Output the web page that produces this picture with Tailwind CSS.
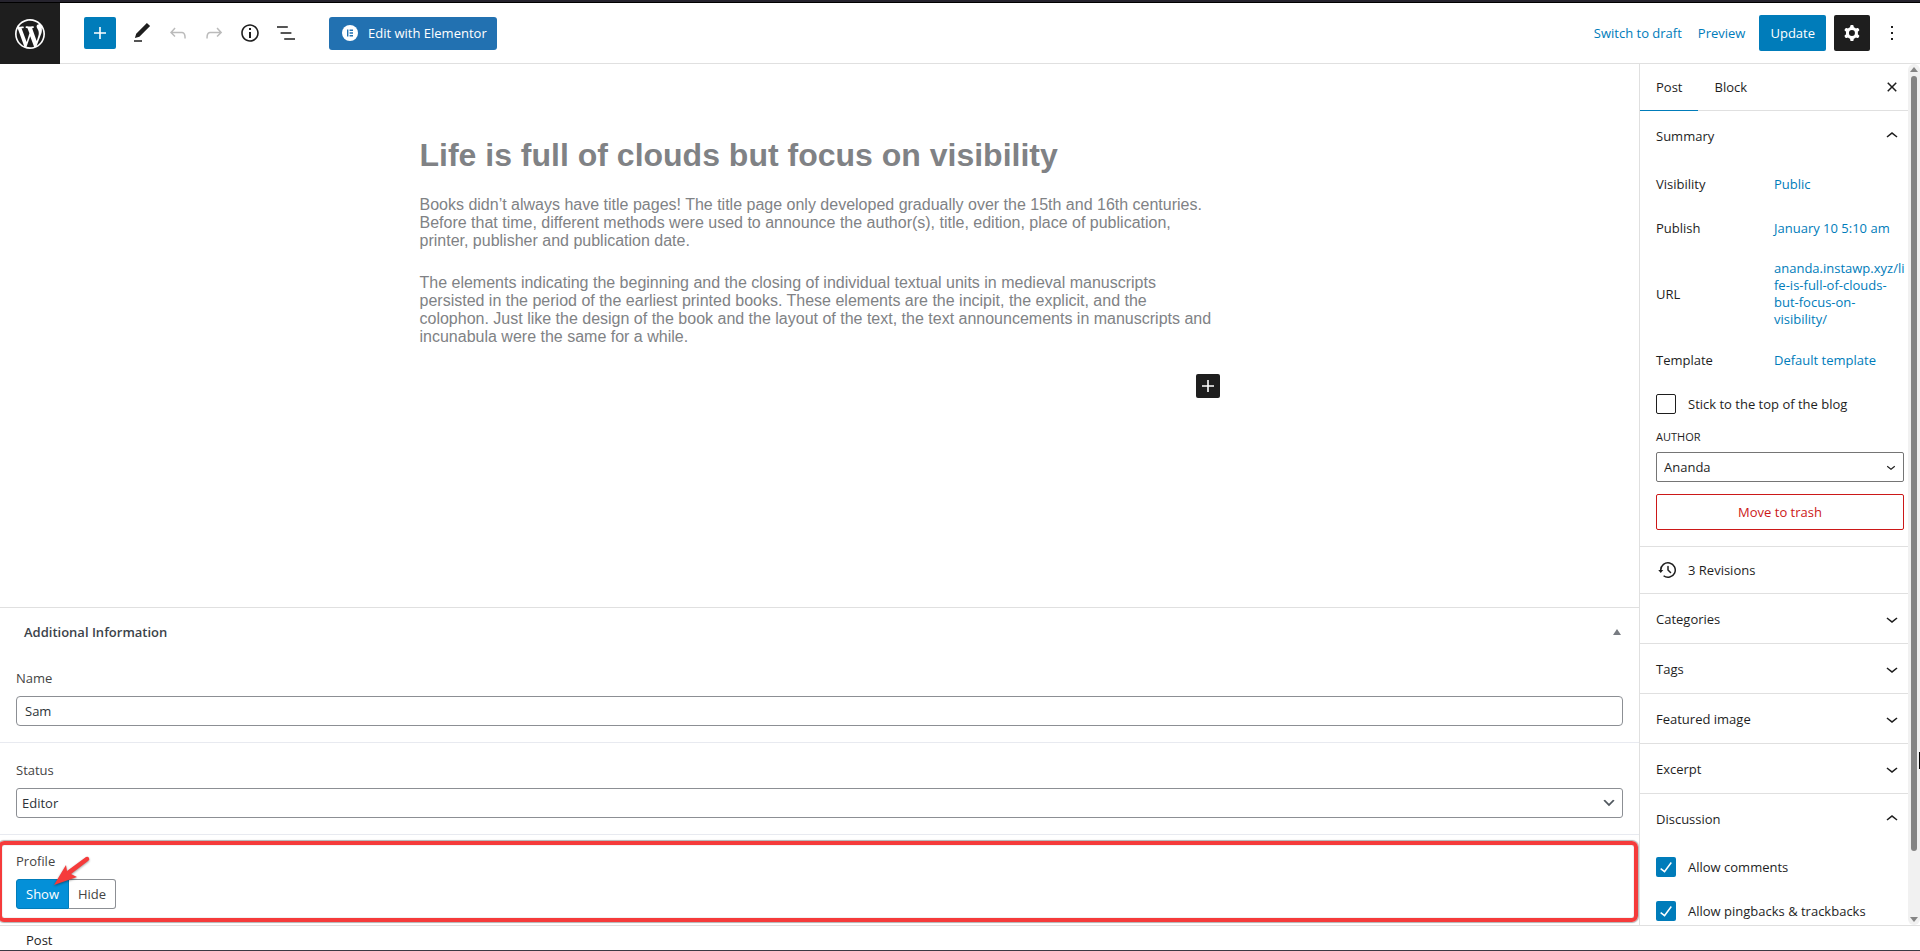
<!DOCTYPE html>
<html lang="en">
<head>
  <meta charset="UTF-8">
  <meta name="viewport" content="width=device-width, initial-scale=1.0">
  <title>Edit Post - WordPress</title>
  <script src="https://cdn.jsdelivr.net/npm/@tailwindcss/browser@4"></script>
</head>
<body class="h-screen flex flex-col overflow-hidden bg-white font-['Open_Sans',sans-serif] text-[13px] leading-5 text-[#1e1e1e]">

  <!-- Browser edge -->
  <div class="h-[3px] shrink-0 bg-[#25232d] border-b border-black"></div>

  <!-- Header -->
  <header class="h-[61px] shrink-0 flex items-stretch">
    <a href="#" aria-label="View posts" class="w-15 bg-[#1e1e1e] text-white flex items-center justify-center">
      <svg class="size-9" viewBox="-2 -2 24 24" fill="currentColor"><path d="M20 10c0-5.51-4.49-10-10-10C4.48 0 0 4.49 0 10c0 5.52 4.48 10 10 10 5.51 0 10-4.48 10-10zM7.78 15.37L4.37 6.22c.55-.02 1.17-.08 1.17-.08.5-.06.44-1.13-.06-1.11 0 0-1.45.11-2.37.11-.18 0-.37 0-.58-.01C4.12 2.69 6.87 1.11 10 1.11c2.33 0 4.45.87 6.05 2.34-.68-.11-1.65.39-1.65 1.58 0 .74.45 1.36.9 2.1.35.61.55 1.36.55 2.46 0 1.49-1.4 5-1.4 5l-3.03-8.37c.54-.02.82-.17.82-.17.5-.05.44-1.25-.06-1.22 0 0-1.44.12-2.38.12-.87 0-2.33-.12-2.33-.12-.5-.03-.56 1.2-.06 1.22l.92.08 1.26 3.41zM17.41 10c.24-.64.74-1.87.43-4.25.7 1.29 1.05 2.71 1.05 4.25 0 3.29-1.73 6.24-4.4 7.78.97-2.59 1.94-5.2 2.92-7.78zM6.1 18.09C3.12 16.65 1.11 13.53 1.11 10c0-1.3.23-2.48.72-3.59C3.25 10.3 4.67 14.2 6.1 18.09zm4.03-6.63l2.58 6.98c-.86.29-1.76.45-2.71.45-.79 0-1.57-.11-2.29-.33.81-2.38 1.62-4.74 2.42-7.1z"/></svg>
    </a>
    <div class="flex-1 flex items-center justify-between pl-6 pr-2.5 border-b border-[#e0e0e0]">
      <div class="flex items-center">
        <button aria-label="Toggle block inserter" class="size-8 mr-2 rounded-xs bg-[#007cba] text-white flex items-center justify-center">
          <svg class="size-6" viewBox="0 0 24 24" fill="currentColor"><path d="M18 11.2h-5.2V6h-1.6v5.2H6v1.6h5.2V18h1.6v-5.2H18z"/></svg>
        </button>
        <button aria-label="Tools" class="size-9 flex items-center justify-center">
          <svg class="size-6" viewBox="0 0 24 24" fill="currentColor"><path d="M20.1 5.1L16.9 2 6.2 12.7l-1.3 4.4 4.5-1.3L20.1 5.1zM4 20.8h8v-1.5H4v1.5z"/></svg>
        </button>
        <button aria-label="Undo" class="size-9 flex items-center justify-center text-[#bbb]">
          <svg class="size-6" viewBox="0 0 24 24" fill="currentColor"><path d="M18.3 11.7c-.6-.6-1.4-.9-2.3-.9H6.7l2.9-3.3-1.1-1-4.5 5L8.5 16l1-1-2.7-2.7H16c.5 0 .9.2 1.3.5 1 1 1 3.4 1 4.5v.3h1.5v-.2c0-1.5 0-4.3-1.5-5.7z"/></svg>
        </button>
        <button aria-label="Redo" class="size-9 flex items-center justify-center text-[#bbb]">
          <svg class="size-6" viewBox="0 0 24 24" fill="currentColor"><path d="M15.6 6.5l-1.1 1 2.9 3.3H8c-.9 0-1.7.3-2.3.9-1.4 1.5-1.4 4.2-1.4 5.6v.2h1.5v-.3c0-1.1 0-3.5 1-4.5.3-.3.7-.5 1.3-.5h9.2L14.5 15l1.1 1.1 4.6-4.6-4.6-5z"/></svg>
        </button>
        <button aria-label="Details" class="size-9 flex items-center justify-center">
          <svg class="size-6" viewBox="0 0 24 24" fill="currentColor"><path d="M12 3.2c-4.8 0-8.8 3.9-8.8 8.8 0 4.8 3.9 8.8 8.8 8.8 4.8 0 8.8-3.9 8.8-8.8 0-4.8-4-8.8-8.8-8.8zm0 16c-4 0-7.2-3.3-7.2-7.2C4.8 8 8 4.8 12 4.8s7.2 3.3 7.2 7.2c0 4-3.2 7.2-7.2 7.2zM11 17h2v-6h-2v6zm0-8h2V7h-2v2z"/></svg>
        </button>
        <button aria-label="List View" class="size-9 mr-[25px] flex items-center justify-center">
          <svg class="size-6" viewBox="0 0 24 24" fill="currentColor"><path d="M13.8 5.2H3v1.5h10.8V5.2zm-3.6 12v1.5H21v-1.5H10.2zm7.2-6H6.6v1.5h10.8v-1.5z"/></svg>
        </button>
        <button class="h-[33px] pl-[13px] pr-2.5 rounded-[3px] bg-[#2271b1] text-white flex items-center gap-2.5">
          <svg class="size-4" viewBox="0 0 16 16"><circle cx="8" cy="8" r="8" fill="#fff"/><path d="M5 4.6h1.4v6.8H5zM7.6 4.6H11v1.3H7.6zM7.6 7.35H11v1.3H7.6zM7.6 10.1H11v1.3H7.6z" fill="#2271b1"/></svg>
          Edit with Elementor
        </button>
      </div>
      <div class="flex items-center">
        <button class="mr-4 text-[#007cba]">Switch to draft</button>
        <a href="#" class="mr-3.5 text-[#007cba]">Preview</a>
        <button class="h-9 px-[11px] mr-2 rounded-xs bg-[#007cba] text-white">Update</button>
        <button aria-label="Settings" class="size-9 mr-1 rounded-xs bg-[#1e1e1e] text-white flex items-center justify-center">
          <svg class="size-6" viewBox="0 0 24 24" fill="currentColor" fill-rule="evenodd"><path d="M10.289 4.836A1 1 0 0111.275 4h1.306a1 1 0 01.987.836l.244 1.466c.787.26 1.503.679 2.108 1.218l1.393-.522a1 1 0 011.216.437l.653 1.13a1 1 0 01-.23 1.273l-1.148.944a6.025 6.025 0 010 2.435l1.149.946a1 1 0 01.23 1.272l-.653 1.13a1 1 0 01-1.216.437l-1.394-.522c-.605.54-1.32.958-2.108 1.218l-.244 1.466a1 1 0 01-.987.836h-1.306a1 1 0 01-.986-.836l-.244-1.466a5.995 5.995 0 01-2.108-1.218l-1.394.522a1 1 0 01-1.217-.436l-.653-1.131a1 1 0 01.23-1.272l1.149-.946a6.026 6.026 0 010-2.435l-1.148-.944a1 1 0 01-.23-1.272l.653-1.131a1 1 0 011.217-.437l1.393.522a5.994 5.994 0 012.108-1.218l.244-1.466zM14.929 12a3 3 0 11-6 0 3 3 0 016 0z"/></svg>
        </button>
        <button aria-label="Options" class="size-9 flex items-center justify-center">
          <svg class="size-6" viewBox="0 0 24 24" fill="currentColor"><path d="M13 19h-2v-2h2v2zm0-6h-2v-2h2v2zm0-6h-2V5h2v2z"/></svg>
        </button>
      </div>
    </div>
  </header>

  <div class="flex-1 min-h-0 flex">
    <!-- Editor -->
    <main class="flex-1 min-w-0 flex flex-col">
      <article class="flex-1 min-h-0 w-full max-w-[800px] mx-auto pt-[73px] font-['Liberation_Sans',sans-serif] text-base leading-[18px] text-[#808285]">
        <h1 class="text-[32px] leading-9 font-bold">Life is full of clouds but focus on visibility</h1>
        <p class="mt-[23px]">Books didn’t always have title pages! The title page only developed gradually over the 15th and 16th centuries. Before that time, different methods were used to announce the author(s), title, edition, place of publication, printer, publisher and publication date.</p>
        <p class="mt-6">The elements indicating the beginning and the closing of individual textual units in medieval manuscripts persisted in the period of the earliest printed books. These elements are the incipit, the explicit, and the colophon. Just like the design of the book and the layout of the text, the text announcements in manuscripts and incunabula were the same for a while.</p>
        <div class="mt-7 flex justify-end">
          <button aria-label="Add block" class="size-6 rounded-xs bg-[#1e1e1e] text-white">
            <svg class="size-6" viewBox="0 0 24 24" fill="currentColor"><path d="M18 11.2h-5.2V6h-1.6v5.2H6v1.6h5.2V18h1.6v-5.2H18z"/></svg>
          </button>
        </div>
      </article>

      <!-- Meta box -->
      <section class="border-t border-[#e0e0e0] text-[#444]">
        <div class="h-12 pl-6 pr-3 flex items-center justify-between">
          <h2 class="font-semibold text-[#3c434a]">Additional Information</h2>
          <button aria-label="Toggle panel" class="p-1.5">
            <svg class="w-2 h-1.5" viewBox="0 0 8 6" fill="#787c82"><path d="M4 0l4 6H0z"/></svg>
          </button>
        </div>
        <div class="px-4 pt-3 pb-4 border-b border-[#e8eaf0]">
          <label for="name" class="block mb-2">Name</label>
          <input id="name" type="text" value="Sam" class="block w-full h-[30px] px-2 border border-[#8c8f94] rounded-sm bg-white text-[#2c3338]">
        </div>
        <div class="px-4 pt-[17px] pb-4 border-b border-[#e8eaf0]">
          <label for="status" class="block mb-2">Status</label>
          <div class="relative">
            <select id="status" class="appearance-none block w-full h-[30px] px-[5px] border border-[#8c8f94] rounded-[3px] bg-white text-[#2c3338]">
              <option>Editor</option>
            </select>
            <svg class="absolute right-1.5 top-[7px] size-4 pointer-events-none" viewBox="0 0 20 20" fill="#50575e"><path d="M5 6l5 5 5-5 2 1-7 7-7-7 2-1z"/></svg>
          </div>
        </div>
        <div class="relative px-4 pt-4 pb-4">
          <div id="profile-label" class="mb-2">Profile</div>
          <div role="group" aria-labelledby="profile-label" class="flex">
            <button class="h-[30px] px-[9px] rounded-l-[3px] border border-[#007cba] bg-[#0490d8] text-white">Show</button>
            <button class="h-[30px] px-[9px] rounded-r-[3px] border border-l-0 border-[#8c8f94]">Hide</button>
          </div>
          <!-- Highlight and arrow -->
          <div class="absolute -left-0.5 right-px top-1.5 bottom-[3px] border-4 border-[#f53b3b] rounded-md shadow-[0_0_1px_1px_#0000004d,inset_0_0_1px_#00000080] pointer-events-none"></div>
          <svg class="absolute left-13 top-5 w-10 h-8 pointer-events-none drop-shadow-[0_1px_1px_#00000066]" viewBox="0 0 40 32" fill="#f53b3b"><path d="M2 30L14 10l1 6L34 2q2-1 3 1t-1 3L19 19l6 3z"/></svg>
        </div>
      </section>
    </main>

    <!-- Settings sidebar -->
    <aside class="relative w-[281px] shrink-0 overflow-hidden border-l border-[#e0e0e0]">
      <div class="h-[47px] flex items-stretch border-b border-[#e0e0e0]">
        <button class="px-4 -mb-px border-b border-[#007cba]">Post</button>
        <button class="px-4">Block</button>
        <button aria-label="Close settings" class="ml-auto mr-4">
          <svg class="size-6" viewBox="0 0 24 24" fill="currentColor"><path d="M12 13.06l3.712 3.713 1.061-1.06L13.061 12l3.712-3.712-1.06-1.06L12 10.938 8.288 7.227l-1.061 1.06L10.939 12l-3.712 3.712 1.06 1.061L12 13.061z"/></svg>
        </button>
      </div>

      <section class="px-4 pb-4 border-b border-[#e0e0e0]">
        <button class="w-full h-[50px] flex items-center justify-between">
          Summary
          <svg class="size-6" viewBox="0 0 24 24" fill="currentColor"><path d="M6.5 12.4L12 8l5.5 4.4-.9 1.2L12 10l-4.5 3.6-1-1.2z"/></svg>
        </button>
        <dl class="grid grid-cols-[118px_1fr] gap-y-2 pt-[5px] items-center">
          <dt>Visibility</dt>
          <dd class="h-9 flex items-center"><a href="#" class="text-[#007cba]">Public</a></dd>
          <dt>Publish</dt>
          <dd class="h-9 flex items-center"><a href="#" class="text-[#007cba]">January 10 5:10 am</a></dd>
          <dt>URL</dt>
          <dd class="h-20 flex items-center leading-[17px]"><a href="#" class="text-[#007cba]">ananda.instawp.xyz/li<wbr>fe-is-full-of-clouds-<wbr>but-focus-on-<wbr>visibility/</a></dd>
          <dt>Template</dt>
          <dd class="h-9 flex items-center"><a href="#" class="text-[#007cba]">Default template</a></dd>
        </dl>
        <label class="mt-4 flex items-center gap-3">
          <input type="checkbox" class="appearance-none size-5 border border-[#1e1e1e] rounded-xs">
          Stick to the top of the blog
        </label>
        <label for="author" class="block mt-[13px] mb-[5px] text-[11px] leading-5 uppercase">Author</label>
        <div class="relative">
          <select id="author" class="appearance-none block w-full h-[30px] px-[7px] border border-[#757575] rounded-xs bg-white">
            <option>Ananda</option>
          </select>
          <svg class="absolute right-1 top-1.5 size-[18px] pointer-events-none" viewBox="0 0 24 24" fill="currentColor"><path d="M17.5 11.6L12 16l-5.5-4.4.9-1.2L12 14l4.5-3.6 1 1.2z"/></svg>
        </div>
        <button class="mt-3 w-full h-9 border border-[#cc1818] rounded-xs text-[#cc1818]">Move to trash</button>
      </section>

      <a href="#" class="h-[47px] px-4 flex items-center gap-2 font-medium border-b border-[#e0e0e0]">
        <svg class="size-6" viewBox="0 0 24 24" fill="currentColor"><path d="M5.5 12h1.75l-2.5 3-2.5-3H4a8 8 0 113.134 6.35l.907-1.194A6.5 6.5 0 105.5 12zm9.53 1.97l-2.28-2.28V8.5a.75.75 0 00-1.5 0V12a.747.747 0 00.218.529l1.282-.84-1.28.842 2.5 2.5a.75.75 0 101.06-1.061z"/></svg>
        3 Revisions
      </a>
      <button class="w-full h-[50px] px-4 flex items-center justify-between border-b border-[#e0e0e0]">
        Categories
        <svg class="size-6" viewBox="0 0 24 24" fill="currentColor"><path d="M17.5 11.6L12 16l-5.5-4.4.9-1.2L12 14l4.5-3.6 1 1.2z"/></svg>
      </button>
      <button class="w-full h-[50px] px-4 flex items-center justify-between border-b border-[#e0e0e0]">
        Tags
        <svg class="size-6" viewBox="0 0 24 24" fill="currentColor"><path d="M17.5 11.6L12 16l-5.5-4.4.9-1.2L12 14l4.5-3.6 1 1.2z"/></svg>
      </button>
      <button class="w-full h-[50px] px-4 flex items-center justify-between border-b border-[#e0e0e0]">
        Featured image
        <svg class="size-6" viewBox="0 0 24 24" fill="currentColor"><path d="M17.5 11.6L12 16l-5.5-4.4.9-1.2L12 14l4.5-3.6 1 1.2z"/></svg>
      </button>
      <button class="w-full h-[50px] px-4 flex items-center justify-between border-b border-[#e0e0e0]">
        Excerpt
        <svg class="size-6" viewBox="0 0 24 24" fill="currentColor"><path d="M17.5 11.6L12 16l-5.5-4.4.9-1.2L12 14l4.5-3.6 1 1.2z"/></svg>
      </button>
      <section class="px-4">
        <button class="w-full h-[50px] flex items-center justify-between">
          Discussion
          <svg class="size-6" viewBox="0 0 24 24" fill="currentColor"><path d="M6.5 12.4L12 8l5.5 4.4-.9 1.2L12 10l-4.5 3.6-1-1.2z"/></svg>
        </button>
        <label class="mt-[13px] flex items-center gap-3">
          <span class="grid size-5">
            <input type="checkbox" checked class="appearance-none col-start-1 row-start-1 size-5 rounded-xs bg-[#007cba]">
            <svg class="col-start-1 row-start-1 size-5 pointer-events-none" viewBox="2 2 20 20" fill="#fff"><path d="M16.7 7.1l-6.3 8.5-3.3-2.5-.9 1.2 4.5 3.4L17.9 8z"/></svg>
          </span>
          Allow comments
        </label>
        <label class="mt-6 flex items-center gap-3">
          <span class="grid size-5">
            <input type="checkbox" checked class="appearance-none col-start-1 row-start-1 size-5 rounded-xs bg-[#007cba]">
            <svg class="col-start-1 row-start-1 size-5 pointer-events-none" viewBox="2 2 20 20" fill="#fff"><path d="M16.7 7.1l-6.3 8.5-3.3-2.5-.9 1.2 4.5 3.4L17.9 8z"/></svg>
          </span>
          Allow pingbacks &amp; trackbacks
        </label>
      </section>

      <!-- Scrollbar -->
      <div class="absolute inset-y-0 right-0 w-3 py-[3px] flex flex-col items-center bg-[#f1f1f1] rounded-md">
        <svg class="w-2 h-[5px] shrink-0" viewBox="0 0 8 5" fill="#858585"><path d="M4 0l4 5H0z"/></svg>
        <div class="mt-1 h-[775px] w-1.5 rounded-full bg-[#858585]"></div>
        <svg class="mt-auto w-2 h-[5px] shrink-0" viewBox="0 0 8 5" fill="#858585"><path d="M0 0h8L4 5z"/></svg>
      </div>
      <div class="absolute right-0 top-[688px] w-px h-[17px] bg-black"></div>
    </aside>
  </div>

  <!-- Breadcrumb -->
  <footer class="h-[26px] shrink-0 pl-[26px] pt-1 border-t border-t-[#e0e0e0] border-b border-b-[#3a3a44]">Post</footer>

</body>
</html>
